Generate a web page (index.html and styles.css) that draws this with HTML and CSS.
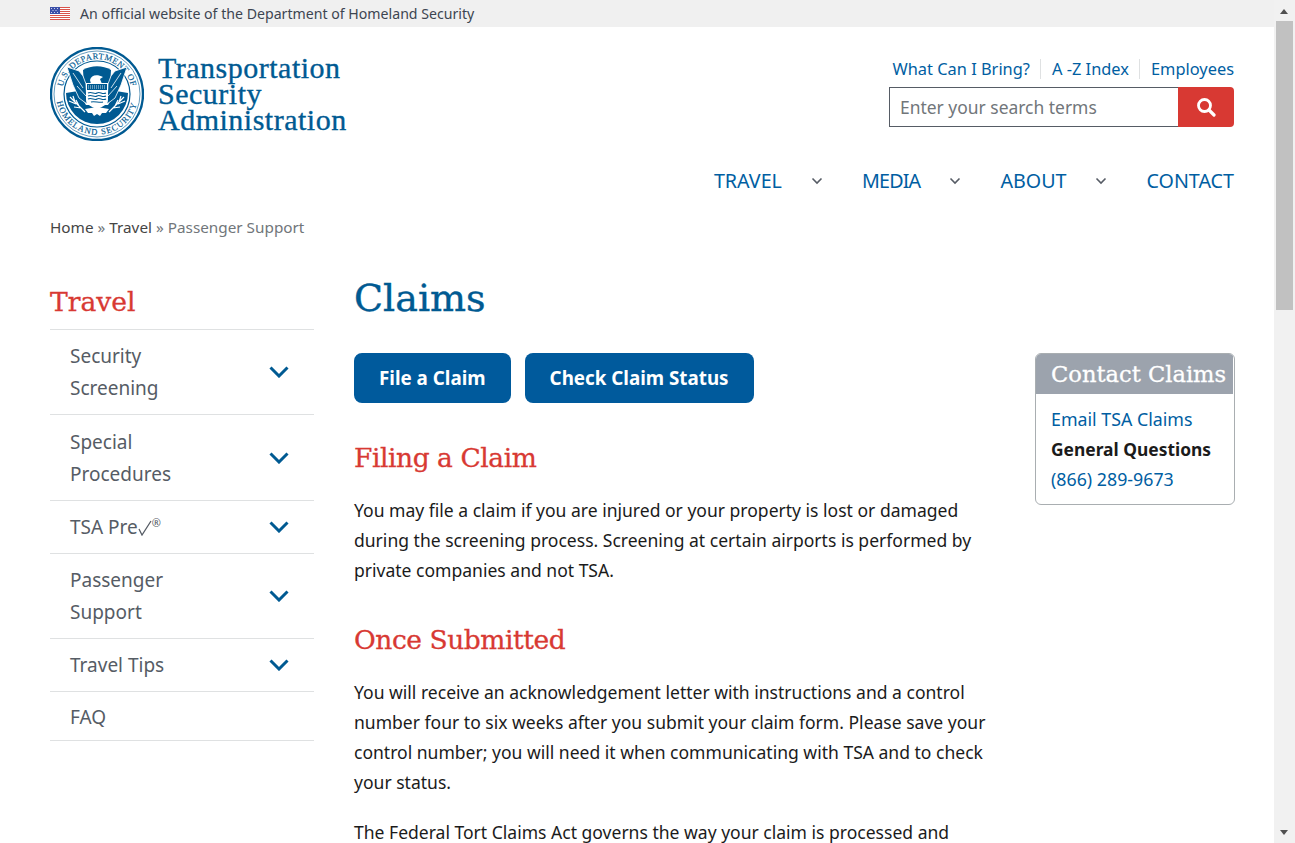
FILE: index.html
```html
<!DOCTYPE html>
<html lang="en">
<head>
    <meta charset="UTF-8">
    <meta name="viewport" content="width=device-width, initial-scale=1.0">
    <title>Claims | Transportation Security Administration</title>
    <link rel="stylesheet" href="styles.css">
</head>
<body>
<div class="page">
    <div class="gov-banner">
        <svg class="flag" viewBox="0 0 20 13" width="20" height="13">
            <rect width="20" height="13" fill="#fff"/>
            <g fill="#d9534a">
                <rect y="0" width="20" height="1"/>
                <rect y="2" width="20" height="1"/>
                <rect y="4" width="20" height="1"/>
                <rect y="6" width="20" height="1"/>
                <rect y="8" width="20" height="1"/>
                <rect y="10" width="20" height="1"/>
                <rect y="12" width="20" height="1"/>
            </g>
            <rect width="10" height="7" fill="#3b4fa8"/>
            <g fill="#c9d0ec">
                <rect x="1" y="1" width="1" height="1"/>
                <rect x="4" y="1" width="1" height="1"/>
                <rect x="7" y="1" width="1" height="1"/>
                <rect x="2.5" y="3" width="1" height="1"/>
                <rect x="5.5" y="3" width="1" height="1"/>
                <rect x="1" y="5" width="1" height="1"/>
                <rect x="4" y="5" width="1" height="1"/>
                <rect x="7" y="5" width="1" height="1"/>
            </g>
        </svg>
        <span>An official website of the Department of Homeland Security</span>
    </div>

    <header class="site-header">
        <a class="brand" href="#">
            <svg class="seal" viewBox="0 0 94 94" width="94" height="94">
                <defs>
                    <path id="arcTop" d="M 12.8 39.7 A 35 35 0 0 1 81.2 39.7"/>
                    <path id="arcBottom" d="M 6.8 54.8 A 41 41 0 0 0 87.2 54.8"/>
                </defs>
                <circle cx="47" cy="47" r="46" fill="#fff" stroke="#005a92" stroke-width="2.4"/>
                <circle cx="47" cy="47" r="43" fill="none" stroke="#005a92" stroke-width="0.6"/>
                <circle cx="47" cy="47" r="33" fill="#fff" stroke="#005a92" stroke-width="1.2"/>
                <text class="seal-text"><textPath href="#arcTop" textLength="94">U.S. DEPARTMENT OF</textPath></text>
                <text class="seal-text"><textPath href="#arcBottom" textLength="110">HOMELAND SECURITY</textPath></text>
                <!-- lower crescent -->
                <path fill="#005a92" d="M16 46 A31 31 0 0 0 78 46 L66 44 L58 58 L36 58 L28 44 Z"/>
                <!-- dome behind the head -->
                <path fill="#005a92" d="M33 23 A28 28 0 0 1 61 23 L60 38 L34 38 Z"/>
                <!-- wings -->
                <path fill="#005a92" stroke="#fff" stroke-width="0.8" d="M17 20 L29 24 L33 29 L36 37 L37 57 L29 51 L23 38 Z"/>
                <path fill="#005a92" stroke="#fff" stroke-width="0.8" d="M77 20 L65 24 L61 29 L58 37 L57 57 L65 51 L71 38 Z"/>
                <path stroke="#fff" stroke-width="0.8" fill="none" d="M23 26 L33 41 M27 39 L36 49 M71 26 L61 41 M67 39 L58 49"/>
                <!-- head -->
                <path fill="#fff" d="M40 33 C41 28 47 27 53 30 L50 32 L52 37 H41 Z"/>
                <!-- shield -->
                <path fill="#fff" d="M36 36 H58 V52 C58 58 52 60 47 62 C42 60 36 58 36 52 Z"/>
                <rect x="37" y="37" width="20" height="6" fill="#005a92"/>
                <path stroke="#fff" stroke-width="0.8" stroke-dasharray="1 1" fill="none" d="M38 39 H56 M38 41 H56"/>
                <path stroke="#005a92" stroke-width="1.1" fill="none" d="M38 46 C42 44 44 48 47 46 C50 44 52 48 56 46 M38 49 C42 47 44 51 47 49 C50 47 52 51 56 49 M38 52 C42 50 44 54 47 52 C50 50 52 54 56 52 M41 55 C44 54 50 56 53 55"/>
                <!-- branches and tail -->
                <path stroke="#fff" stroke-width="1.2" fill="none" d="M20 50 L35 65 M23 49 L25 55 M19 54 L26 57 M26 53 L29 59 M24 60 L31 61 M74 50 L59 65 M71 49 L69 55 M75 54 L68 57 M68 53 L65 59 M70 60 L63 61"/>
                <path fill="#fff" d="M35 62 L47 60 L59 62 L56 66 L52 66 L50 69 L47 67 L44 69 L42 66 L38 66 Z"/>
            </svg>
            <span class="brand-name">Transportation<br>Security<br>Administration</span>
        </a>
        <div class="header-tools">
            <ul class="util-links">
                <li><a href="#">What Can I Bring?</a></li>
                <li><a href="#">A -Z Index</a></li>
                <li><a href="#">Employees</a></li>
            </ul>
            <form class="search">
                <input type="text" placeholder="Enter your search terms">
                <button type="button" aria-label="Search">
                    <svg viewBox="0 0 20 20" width="20" height="20" fill="none" stroke="#fff">
                        <circle cx="8.5" cy="8.5" r="6" stroke-width="2.8"/>
                        <path d="M13 13 L18 18" stroke-width="3.2" stroke-linecap="round"/>
                    </svg>
                </button>
            </form>
        </div>
    </header>

    <nav class="main-nav">
        <a href="#">TRAVEL</a>
        <svg class="nav-caret" viewBox="0 0 12 8" width="12" height="8"><path d="M1.5 1.5 L6 6 L10.5 1.5"/></svg>
        <a class="tight" href="#">MEDIA</a>
        <svg class="nav-caret" viewBox="0 0 12 8" width="12" height="8"><path d="M1.5 1.5 L6 6 L10.5 1.5"/></svg>
        <a href="#">ABOUT</a>
        <svg class="nav-caret" viewBox="0 0 12 8" width="12" height="8"><path d="M1.5 1.5 L6 6 L10.5 1.5"/></svg>
        <a href="#">CONTACT</a>
    </nav>

    <div class="breadcrumb">
        <a href="#">Home</a> » <a href="#">Travel</a> » <span>Passenger Support</span>
    </div>

    <div class="columns">
        <aside class="sidebar">
            <h2>Travel</h2>
            <ul>
                <li><a href="#">Security Screening</a><svg class="side-caret" viewBox="0 0 20 12" width="20" height="12"><path d="M1.5 1.5 L10 10 L18.500 1.500"/></svg></li>
                <li class="row-tall"><a href="#">Special Procedures</a><svg class="side-caret" viewBox="0 0 20 12" width="20" height="12"><path d="M1.5 1.5 L10 10 L18.500 1.500"/></svg></li>
                <li><a href="#">TSA Pre<svg class="pre-check" viewBox="0 0 14 16" width="14" height="16"><path d="M1 9 L4 15 L13 1"/></svg><sup>®</sup></a><svg class="side-caret" viewBox="0 0 20 12" width="20" height="12"><path d="M1.5 1.5 L10 10 L18.500 1.500"/></svg></li>
                <li><a href="#">Passenger Support</a><svg class="side-caret" viewBox="0 0 20 12" width="20" height="12"><path d="M1.5 1.5 L10 10 L18.500 1.500"/></svg></li>
                <li><a href="#">Travel Tips</a><svg class="side-caret" viewBox="0 0 20 12" width="20" height="12"><path d="M1.5 1.5 L10 10 L18.500 1.500"/></svg></li>
                <li class="no-caret"><a href="#">FAQ</a></li>
            </ul>
        </aside>

        <main class="content">
            <h1>Claims</h1>
            <div class="content-row">
                <div class="article">
                    <div class="actions">
                        <a class="btn" href="#">File a Claim</a>
                        <a class="btn" href="#">Check Claim Status</a>
                    </div>
                    <h3>Filing a Claim</h3>
                    <p>You may file a claim if you are injured or your property is lost or damaged during the screening process. Screening at certain airports is performed by private companies and not TSA.</p>
                    <h3>Once Submitted</h3>
                    <p>You will receive an acknowledgement letter with instructions and a control number four to six weeks after you submit your claim form. Please save your control number; you will need it when communicating with TSA and to check your status.</p>
                    <p>The Federal Tort Claims Act governs the way your claim is processed and</p>
                </div>
                <div class="contact-box">
                    <h4>Contact Claims</h4>
                    <div class="contact-body">
                        <a href="#">Email TSA Claims</a>
                        <strong>General Questions</strong>
                        <a href="#">(866) 289-9673</a>
                    </div>
                </div>
            </div>
        </main>
    </div>
</div>

<div class="scrollbar">
    <span class="arrow-up"></span>
    <span class="thumb"></span>
    <span class="arrow-down"></span>
</div>
</body>
</html>
```

FILE: styles.css
```css
html, body {
    height: 100%;
}
body {
    margin: 0;
    display: flex;
    height: 843px;
    overflow: hidden;
    background-color: #fff;
    color: #1b1b1b;
    font-family: "Noto Sans", sans-serif;
    font-size: 17.55px;
    line-height: 30px;
}
a {
    color: #005ea2;
    text-decoration: none;
}
ul {
    list-style-type: none;
    margin: 0;
    padding: 0;
}
.page {
    width: 1274px;
    flex: none;
    overflow: hidden;
}

/* top strip */
.gov-banner {
    display: flex;
    align-items: center;
    gap: 10px;
    height: 27px;
    padding-left: 50px;
    background-color: #f0f0f0;
    font-size: 14.15px;
    line-height: 27px;
    color: #3d4551;
}

/* header */
.site-header {
    display: flex;
    justify-content: space-between;
    padding: 20px 40px 0 50px;
}
.brand {
    display: flex;
    gap: 14px;
    height: 94px;
}
.seal-text {
    font-family: "Liberation Serif", serif;
    font-size: 8.6px;
    fill: #005a92;
    stroke: #005a92;
    stroke-width: 0.15px;
}
.brand-name {
    padding-top: 8px;
    font-family: "Liberation Serif", serif;
    font-size: 30px;
    line-height: 26px;
    letter-spacing: 0.5px;
    color: #005a92;
    -webkit-text-stroke: 0.35px #005a92;
}
.header-tools {
    display: flex;
    flex-direction: column;
    align-items: flex-end;
    padding-top: 12px;
}
.util-links {
    display: flex;
    font-size: 16.4px;
    line-height: 20px;
}
.util-links li + li {
    margin-left: 10px;
    padding-left: 11px;
    border-left: 1px solid #dfe1e2;
}
.search {
    display: flex;
    width: 345px;
    height: 40px;
    margin-top: 8px;
}
.search input {
    flex: 1;
    min-width: 0;
    box-sizing: border-box;
    padding: 0 10px;
    border: 1px solid #565c65;
    border-right: 0;
    border-radius: 0;
    font-family: "Noto Sans", sans-serif;
    font-size: 17.45px;
    outline: none;
}
.search input::placeholder {
    color: #71767a;
}
.search button {
    display: flex;
    align-items: center;
    justify-content: center;
    width: 56px;
    border: 0;
    padding: 0;
    border-radius: 0 4px 4px 0;
    background-color: #d83933;
}

/* main nav */
.main-nav {
    display: flex;
    align-items: center;
    justify-content: flex-end;
    margin-top: 24px;
    padding-right: 40px;
    font-size: 19.7px;
    line-height: 32px;
}
.main-nav .tight {
    letter-spacing: -0.8px;
}
.nav-caret {
    margin: 0 39px 0 29px;
}
.nav-caret path {
    fill: none;
    stroke: #565c65;
    stroke-width: 1.6;
}

.breadcrumb {
    margin-top: 15px;
    padding-left: 50px;
    font-size: 15.3px;
    color: #71767a;
}
.breadcrumb a {
    color: #454545;
}

/* two columns */
.columns {
    display: flex;
    gap: 40px;
    padding: 31px 39px 0 50px;
}
.sidebar {
    width: 264px;
    flex: none;
}
.sidebar h2 {
    margin: 9px 0 0;
    padding: 0 0 7px;
    font-family: "DejaVu Serif", serif;
    font-weight: 400;
    font-size: 26.6px;
    line-height: 40px;
    color: #d83933;
    border-bottom: 1px solid #dfe1e2;
    -webkit-text-stroke: 0.3px #d83933;
}
.sidebar li {
    display: flex;
    align-items: center;
    justify-content: space-between;
    padding: 10px 25px 10px 20px;
    border-bottom: 1px solid #dfe1e2;
    font-size: 19px;
    line-height: 32px;
}
.sidebar li.row-tall {
    padding-top: 11px;
}
.sidebar li.no-caret {
    padding: 9px 20px 7px;
}
.sidebar li a {
    width: 130px;
    color: #565c65;
}
.sidebar sup {
    font-size: 11px;
    line-height: 0;
}
.pre-check {
    vertical-align: -2px;
}
.pre-check path {
    fill: none;
    stroke: #565c65;
    stroke-width: 1.3;
}
.side-caret path {
    fill: none;
    stroke: #005a92;
    stroke-width: 3;
}

.content {
    flex: 1;
    min-width: 0;
}
.content h1 {
    margin: 0;
    font-family: "DejaVu Serif", serif;
    font-weight: 400;
    font-size: 38px;
    line-height: 50px;
    color: #005a92;
    -webkit-text-stroke: 0.4px #005a92;
}
.content-row {
    display: flex;
    justify-content: space-between;
    margin-top: 30px;
}
.article {
    width: 640px;
}
.actions {
    display: flex;
    gap: 14px;
}
.btn {
    display: block;
    height: 50px;
    padding: 0 25px;
    border-radius: 8px;
    background-color: #005a9c;
    color: #fff;
    font-weight: 700;
    font-size: 18.8px;
    line-height: 50px;
}
.article h3 {
    margin: 30px 0 0;
    font-family: "DejaVu Serif", serif;
    font-weight: 400;
    font-size: 26.5px;
    letter-spacing: -0.45px;
    line-height: 50px;
    color: #d83933;
    -webkit-text-stroke: 0.3px #d83933;
}
.article p {
    margin: 15px 0 0;
}
.article h3 + p {
    margin-top: 12px;
}
.article p + p {
    margin-top: 20px;
}
.contact-box {
    box-sizing: border-box;
    width: 200px;
    height: 152px;
    flex: none;
    border: 1px solid #a9aeb1;
    border-radius: 6px;
    overflow: hidden;
}
.contact-box h4 {
    margin: 0 1px 0 0;
    padding-left: 15px;
    background-color: #9ca3ad;
    color: #fff;
    font-family: "DejaVu Serif", serif;
    font-weight: 400;
    font-size: 22.6px;
    line-height: 40px;
    white-space: nowrap;
    -webkit-text-stroke: 0.3px #fff;
}
.contact-body {
    display: flex;
    flex-direction: column;
    padding: 10px 15px;
    font-size: 17.8px;
}
.contact-body strong {
    font-weight: 700;
    font-size: 17.4px;
}

/* browser scrollbar seen in the screenshot */
.scrollbar {
    position: relative;
    flex: 1;
    background-color: #f1f1f1;
}
.thumb {
    position: absolute;
    left: 2px;
    right: 2px;
    top: 21px;
    height: 289px;
    background-color: #c1c1c1;
}
.arrow-up, .arrow-down {
    position: absolute;
    left: 6px;
    border-left: 4.5px solid transparent;
    border-right: 4.5px solid transparent;
}
.arrow-up {
    top: 9px;
    border-bottom: 5px solid #505050;
}
.arrow-down {
    bottom: 8px;
    border-top: 5px solid #505050;
}
```
